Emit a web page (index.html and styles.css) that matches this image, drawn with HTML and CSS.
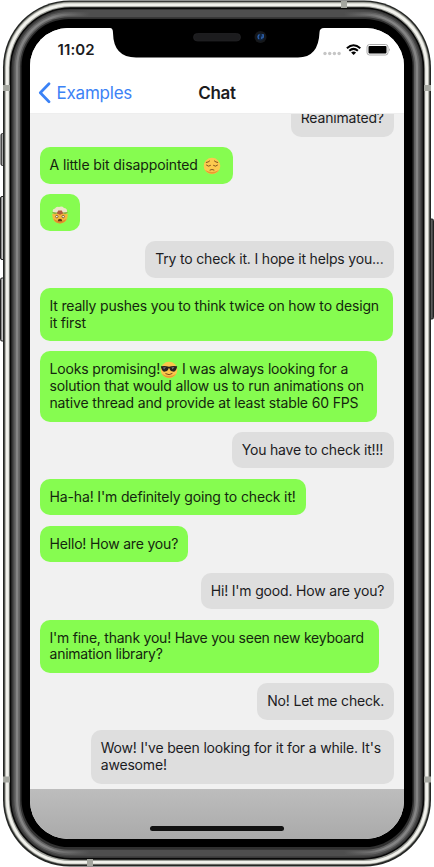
FILE: index.html
```
<!DOCTYPE html>
<html lang="en">
<head>
<meta charset="utf-8">
<title>Chat</title>
<link rel="stylesheet" href="styles.css">
</head>
<body>
<div class="device">
<svg class="shell" viewBox="0 0 434 867" width="434" height="867" fill="none">
  <defs>
    <linearGradient id="btn" x1="0" x2="1"><stop stop-color="#555"/><stop offset=".4" stop-color="#c4c4c4"/><stop offset="1" stop-color="#666"/></linearGradient>
    <linearGradient id="btnR" x1="0" x2="1"><stop stop-color="#ddd"/><stop offset=".5" stop-color="#666"/><stop offset="1" stop-color="#333"/></linearGradient>
    <linearGradient id="edge" x1="0" x2="1"><stop stop-color="#4e4e4e" stop-opacity="0"/><stop offset=".12" stop-color="#4e4e4e"/><stop offset=".88" stop-color="#4e4e4e"/><stop offset="1" stop-color="#4e4e4e" stop-opacity="0"/></linearGradient>
  </defs>
  <g fill="url(#btn)" stroke="#222" stroke-width="1">
    <rect x="1" y="133.500" width="5" height="32" rx="1.500"/>
    <rect x=".5" y="196.500" width="5" height="63" rx="1.500"/>
    <rect x=".5" y="278" width="5" height="63" rx="1.500"/>
  </g>
  <rect x="428.500" y="219" width="5" height="100" rx="1.500" fill="url(#btnR)" stroke="#222"/>
  <rect x="3" y=".5" width="428" height="866" rx="67" fill="#242624"/>
  <rect x="4.500" y="1.800" width="425" height="863" rx="65.500" fill="#7c7e78"/>
  <rect x="5.200" y="2.500" width="423.600" height="861.600" rx="65" fill="#c3c4bd"/>
  <rect x="6" y="3.500" width="422" height="860" rx="64" fill="#f1f1ec"/>
  <rect x="8.800" y="6.200" width="416.400" height="854.800" rx="61.500" fill="#9a9c96"/>
  <rect x="9.700" y="7.300" width="414.600" height="852.400" rx="61" fill="#080808"/>
  <rect x="11.400" y="9" width="411.200" height="849" rx="59" fill="#383838"/>
  <rect x="13" y="10.500" width="408" height="846" rx="57" fill="#4a4a4a"/>
  <rect x="14.400" y="12" width="405.200" height="843" rx="55" fill="#686868"/>
  <rect x="16" y="13.600" width="402" height="839.800" rx="53" fill="#848484"/>
  <rect x="18.300" y="15.700" width="397.400" height="835.600" rx="51" fill="#616161"/>
  <rect x="50" y="10" width="334" height="8.500" fill="url(#edge)"/>
  <rect x="50" y="847" width="334" height="9" fill="url(#edge)"/>
  <rect x="20" y="17.300" width="394" height="832.400" rx="49" fill="#303030"/>
  <rect x="21.500" y="19" width="391" height="828" rx="47.500" fill="#000"/>
  <g fill="#a4a69f">
    <rect x="341" y="1" width="6" height="7"/><rect x="87" y="859" width="6" height="7"/>
    <rect x="3" y="85" width="7" height="6"/><rect x="424" y="85" width="7" height="6"/>
    <rect x="3" y="776.500" width="7" height="6"/><rect x="424" y="776.500" width="7" height="6"/>
  </g>
</svg>
<div class="screen">
  <header class="status">
    <span class="time">11:02</span>
    <svg class="indicators" viewBox="0 0 70 16" width="70" height="16">
      <g fill="#c6c6c6"><circle cx="4" cy="10.500" r="1.700"/><circle cx="8.700" cy="10.500" r="1.700"/><circle cx="13.400" cy="10.500" r="1.700"/><circle cx="18.100" cy="10.500" r="1.700"/></g>
      <g fill="none" stroke="#000" stroke-width="2"><path d="M25.900 5.300Q32.500-.7 39.300 5.300M28.300 7.800Q32.500 4 36.900 7.800"/></g>
      <path d="M30.100 9.500Q32.600 7.500 35.100 9.500L32.600 12z"/>
      <rect x="46" y="1.500" width="21" height="10.500" rx="2.500" fill="none" stroke="#aaa"/>
      <rect x="47.500" y="3" width="18" height="7.500" rx="1"/>
      <path d="M68 5q1.600 1.600 0 3.400z" fill="#999"/>
    </svg>
  </header>
  <nav class="nav">
    <div class="back"><svg viewBox="0 0 14 22" width="14" height="22"><path d="M11 1.800 2.300 10.800 11 19.800" fill="none" stroke="#3b82f6" stroke-width="2.700" stroke-linecap="round" stroke-linejoin="round"/></svg><span>Examples</span></div>
    <h1>Chat</h1>
  </nav>
  <main class="messages">
    <p class="msg them m1">Reanimated?</p>
    <p class="msg me m2">A little bit disappointed <svg class="emoji sad" viewBox="0 0 18 18"><circle cx="9" cy="9" r="8.300" fill="#fcca4e"/><path d="M2 13a8.300 8.300 0 0 0 14 0Q9 17 2 13" fill="#e99b32"/><g fill="none" stroke="#754718" stroke-width=".9" stroke-linecap="round"><path d="M3.500 8.200q2 2 4 .3M10.500 8.500q2 1.700 4-.3M7 13q2-1.200 4 0M3.300 5.500q2-.2 3.300-1.500M11.400 4q1.400 1.300 3.300 1.500"/></g></svg></p>
    <p class="msg me m3"><svg class="emoji burst" viewBox="0 0 18 18"><path d="M1.200 8Q9 5 16.800 8q0 9.400-7.800 9.400T1.200 8" fill="#f5b83f"/><path d="M2.500 13q6.500 4 13 0Q13.500 17.400 9 17.400T2.500 13" fill="#e08f2c"/><path d="M.8 6.600 4 8.300l2-1 3 1.200 3-1.300 2 1 3.200-1.600-3.200-1H4z" fill="#8caf3e"/><path d="M2 6Q.8 3.200 4 2.500 5 .4 8 1q3-1.300 5 1 3.500.3 3 4l-4.500.6-3-1-3 1z" fill="#eee5ca"/><path d="M7.200 4.500h3.600l1.400 3L9 8.700 5.800 7.500z" fill="#b45b3b"/><g fill="#fff" stroke="#623811" stroke-width=".7"><circle cx="5.800" cy="10.600" r="1.200"/><circle cx="12.200" cy="10.600" r="1.200"/></g><path d="M6.800 15.200q0-2.400 2.200-2.400t2.200 2.400z" fill="#623811"/></svg></p>
    <p class="msg them m4">Try to check it. I hope it helps you...</p>
    <p class="msg me m5">It really pushes you to think twice on how to design<br>it first</p>
    <p class="msg me m6">Looks promising!<svg class="emoji" viewBox="0 0 18 18"><circle cx="9" cy="9" r="8.300" fill="#fcc64a"/><path d="M2 13a8.300 8.300 0 0 0 14 0Q9 17 2 13" fill="#e99b32"/><path d="M.8 5.300Q5 4.400 9 5.700q4-1.300 8.200-.4l-.5 2Q15.500 11 13 10.600q-2.700 0-3.600-3.300h-.8Q7.700 10.600 5 10.600 2.500 11 1.300 7.300z" fill="#25231d"/><path d="m3 6.500 3-.4-2 2.500zm8.500-.3 3-.1-2 2.500z" fill="#777"/><path d="M5.800 12.800q3.500 2 6.300-.2" fill="none" stroke="#754718" stroke-width="1" stroke-linecap="round"/></svg> I was always looking for a<br>solution that would allow us to run animations on<br>native thread and provide at least stable 60 FPS</p>
    <p class="msg them m7">You have to check it!!!</p>
    <p class="msg me m8">Ha-ha! I'm definitely going to check it!</p>
    <p class="msg me m9">Hello! How are you?</p>
    <p class="msg them m10">Hi! I'm good. How are you?</p>
    <p class="msg me m11">I'm fine, thank you! Have you seen new keyboard<br>animation library?</p>
    <p class="msg them m12">No! Let me check.</p>
    <p class="msg them m13">Wow! I've been looking for it for a while. It's<br>awesome!</p>
  </main>
  <footer class="keyboard"><span class="home"></span></footer>
</div>
<svg class="notch" viewBox="0 0 214 31" width="214" height="31">
  <path d="M0 0H214V1Q209.500 1 209.500 5.500 208.500 30.500 188 30.500H26Q3.500 30.500 3 6 3 1 0 1z" fill="#000"/>
  <rect x="83.500" y="6.500" width="47" height="7.500" rx="3.750" fill="#1c1c1e" stroke="#242426" stroke-width=".7"/>
  <circle cx="150.500" cy="10" r="6" fill="#15171a"/><circle cx="150.500" cy="10" r="3.600" fill="#10243f"/><path d="M149.500 7.500q-2.500 2-.5 4.500M151.800 7.800h1.500v2.300h-1.500v2" fill="none" stroke="#2f64b1" stroke-width="1.200"/>
</svg>
</div>
</body>
</html>
```
FILE: styles.css
```
* { box-sizing: border-box; }
body { margin: 0; background: #fff; font-family: Inter, "Liberation Sans", sans-serif; color: #1c1c1e; overflow: hidden; }
.device { position: relative; width: 434px; height: 867px; padding: 27.500px 30px 28.500px; }
.shell { position: absolute; left: 0; top: 0; }
.screen { position: relative; width: 374px; height: 811px; border-radius: 38px; overflow: hidden; background: #f1f1f1; display: flex; flex-direction: column; }
.notch { position: absolute; left: 110px; top: 27px; }
.status { flex: none; height: 44px; background: #fff; display: flex; justify-content: space-between; padding: 13px 13.500px 0 27.500px; }
.time { font-size: 15px; line-height: 18px; font-weight: 600; letter-spacing: .1px; }
.indicators { margin-top: 2px; }
.nav { flex: none; height: 42.500px; background: #fff; display: grid; grid-template-columns: 1fr auto 1fr; align-items: center; padding: 1px 8px 0; border-bottom: .5px solid #eee; }
.back { display: flex; align-items: center; gap: 4.500px; color: #3b82f6; font-size: 17px; letter-spacing: -.22px; }
.back span, .nav h1 { padding-top: 1px; }
.nav h1 { margin: 0; font-size: 17px; font-weight: 600; letter-spacing: -.3px; }
.messages { height: 674.600px; flex: none; overflow: hidden; display: flex; flex-direction: column; justify-content: flex-end; align-items: flex-start; gap: 10.200px; padding: 0 9.800px 5px 9.500px; }
.msg { margin: 0; flex: none; padding: 10.070px 0 10.070px 10px; border-radius: 10px; font-size: 14px; line-height: 16.660px; letter-spacing: -.18px; white-space: nowrap; }
.me { background: #86fc50; color: #14260e; }
.them { background: #dedede; align-self: flex-end; }
.emoji { width: 18px; height: 18px; margin: -3px 0 -4px; vertical-align: -1px; }
.sad { margin-left: 1px; }
.burst { margin-left: 1px; vertical-align: -3px; }
.m1 { width: 103.500px; }
.m2 { width: 193.500px; letter-spacing: -.1px; }
.m3 { width: 40px; height: 36.800px; }
.m4 { width: 249px; }
.m5 { width: 353.200px; }
.m6 { width: 337.500px; letter-spacing: -.15px; }
.m7 { width: 162.500px; }
.m8 { width: 266.500px; letter-spacing: -.14px; }
.m9 { width: 148.500px; }
.m10 { width: 193.500px; }
.m11 { width: 339px; letter-spacing: -.23px; }
.m12 { width: 137px; }
.m13 { width: 303.500px; }
.keyboard { flex: 1; background: linear-gradient(#bdbdbd, #aaa); display: flex; justify-content: center; align-items: flex-end; padding-bottom: 8px; }
.home { width: 134px; height: 5px; border-radius: 3px; background: #111; }
```
